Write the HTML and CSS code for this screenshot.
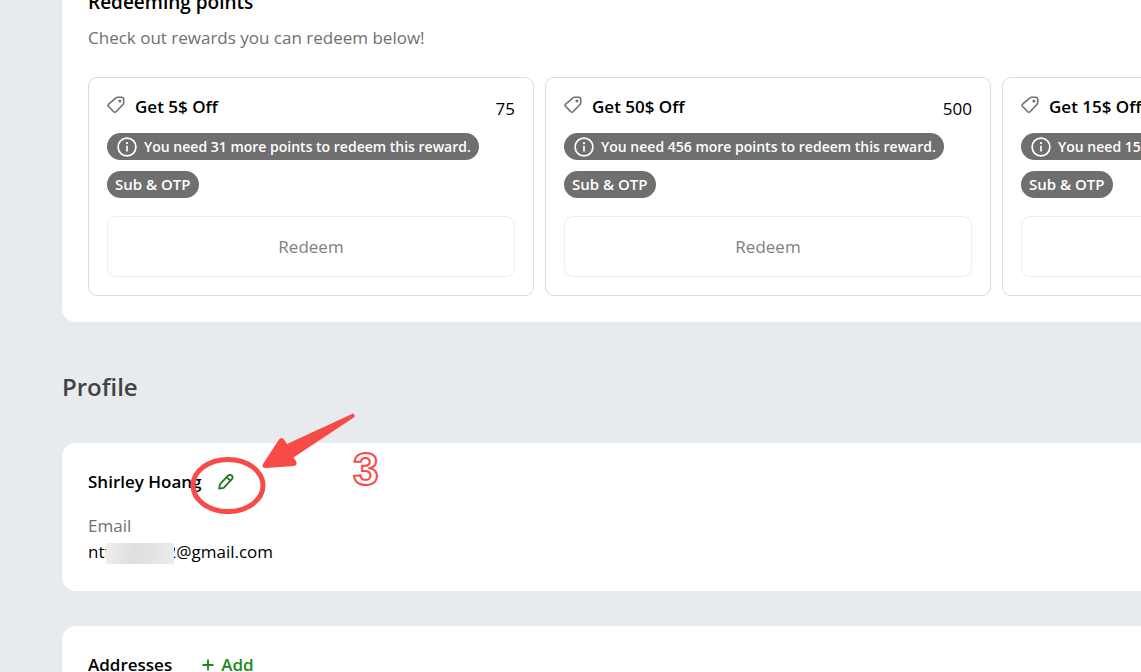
FILE: index.html
```html
<!DOCTYPE html>
<html lang="en">
<head>
<meta charset="utf-8">
<title>Rewards and profile</title>
<link rel="stylesheet" href="styles.css">
</head>
<body>
<svg class="defs" aria-hidden="true">
  <symbol id="tag" viewBox="0 0 18 18">
    <path d="M10.600 1.300h4.200a1.900 1.900 0 0 1 1.900 1.900v3.600a2.400 2.400 0 0 1-.7 1.700l-7 7.300a1.600 1.600 0 0 1-2.300 0L1.500 10.300a1.500 1.500 0 0 1 .1-2.200L9 1.900a2.400 2.400 0 0 1 1.600-.6z" fill="none" stroke="currentColor" stroke-width="1.600" stroke-linejoin="round"/>
    <circle cx="12.900" cy="5" r="1.500" fill="currentColor"/>
  </symbol>
  <symbol id="info" viewBox="0 0 20 20">
    <circle cx="10" cy="10" r="8.900" fill="none" stroke="currentColor" stroke-width="1.700"/>
    <path d="M10 8.800v5.600" fill="none" stroke="currentColor" stroke-width="1.700"/>
    <circle cx="10" cy="6.200" r="1.100" fill="currentColor"/>
  </symbol>
</svg>
<main class="page">
  <section class="panel rewards">
    <h2 class="title heading">Redeeming points</h2>
    <p class="lead">Check out rewards you can redeem below!</p>
    <div class="cards">
      <article class="card">
        <header class="card-head">
          <svg class="tag-icon"><use href="#tag"/></svg>
          <h3 class="title">Get 5$ Off</h3>
          <span class="cost">75</span>
        </header>
        <p class="pill notice"><svg class="info-icon"><use href="#info"/></svg>You need 31 more points to redeem this reward.</p>
        <p class="pill">Sub &amp; OTP</p>
        <button class="redeem" type="button">Redeem</button>
      </article>
      <article class="card">
        <header class="card-head">
          <svg class="tag-icon"><use href="#tag"/></svg>
          <h3 class="title">Get 50$ Off</h3>
          <span class="cost">500</span>
        </header>
        <p class="pill notice"><svg class="info-icon"><use href="#info"/></svg>You need 456 more points to redeem this reward.</p>
        <p class="pill">Sub &amp; OTP</p>
        <button class="redeem" type="button">Redeem</button>
      </article>
      <article class="card">
        <header class="card-head">
          <svg class="tag-icon"><use href="#tag"/></svg>
          <h3 class="title">Get 15$ Off</h3>
        </header>
        <p class="pill notice"><svg class="info-icon"><use href="#info"/></svg>You need 156 more points to redeem this reward.</p>
        <p class="pill">Sub &amp; OTP</p>
        <button class="redeem" type="button" aria-label="Redeem"></button>
      </article>
    </div>
  </section>

  <h1 class="section-title">Profile</h1>

  <section class="panel profile">
    <div class="row">
      <h2 class="title">Shirley Hoang</h2>
      <button class="edit" type="button" aria-label="Edit profile">
        <svg class="pencil" viewBox="0 0 16 18">
          <path d="M1.200 15.700 1.800 11.300 10 2.700a2.600 2.600 0 0 1 3.900 3.500L5.700 14.800zM8.700 4.300l3.700 3.400" fill="none" stroke="currentColor" stroke-width="1.800" stroke-linejoin="round"/>
        </svg>
      </button>
    </div>
    <p class="label">Email</p>
    <p class="value">ntt<span class="redacted"></span>2@gmail.com</p>
    <svg class="marks" viewBox="0 0 180 110" aria-hidden="true">
      <ellipse cx="38" cy="76.500" rx="35" ry="26" fill="none" stroke="#f84b48" stroke-width="5"/>
      <path d="M163 4.500 97 35 94 30.500Q91.500 27.500 89 30.500L73 55Q71 59 76 59L104 57Q108 56 106 52L103.500 48.500 164.500 8Q165 5 163 4.500z" fill="#f84b48"/>
    </svg>
    <span class="step">3</span>
  </section>

  <section class="panel addresses">
    <div class="row">
      <h2 class="title">Addresses</h2>
      <button class="add" type="button"><svg class="plus" viewBox="0 0 12 12"><path d="M6 .5v11M.5 6h11" stroke="currentColor" stroke-width="1.800"/></svg>Add</button>
    </div>
  </section>
</main>
</body>
</html>
```
FILE: styles.css
```css
* { box-sizing: border-box; }
body {
  margin: 0;
  background: #e7ebee;
  color: #000;
  font: 17px/26px "Open Sans", "Noto Sans", sans-serif;
  overflow: hidden;
}
h1, h2, h3, p { margin: 0; }
button { font: inherit; background: none; border: 0; padding: 0; }
.defs { display: none; }
.page { padding-left: 62px; }
.panel {
  background: #fff;
  border-radius: 14px 0 0 14px;
  padding: 26px 0 26px 26px;
}
.title { font-size: 17px; line-height: 26px; font-weight: 600; }
.rewards { margin-top: -11px; border-top-left-radius: 0; padding-top: 0; }
.heading { font-size: 19px; }
.lead { color: #707070; margin: 10px 0 26px; }
.cards { display: flex; gap: 11px; overflow: hidden; }
.card {
  flex: none;
  width: 446px;
  padding: 18px;
  border: 1px solid #dadada;
  border-radius: 9px;
  display: flex;
  flex-direction: column;
  align-items: flex-start;
}
.card-head { display: flex; align-self: stretch; height: 26px; margin-bottom: 11px; }
.card-head .title { line-height: 22px; }
.tag-icon { width: 18px; height: 18px; color: #707070; margin-right: 10px; }
.cost { margin-left: auto; }
.pill {
  background: #6f6f6f;
  color: #fff;
  border-radius: 14px;
  padding: 0 8px;
  font-size: 15px;
  line-height: 27px;
  font-weight: 600;
}
.notice { display: flex; align-items: center; margin-bottom: 11px; font-size: 14px; }
.info-icon { width: 20px; height: 20px; margin: 0 7px 0 2px; }
.redeem {
  align-self: stretch;
  height: 61px;
  margin-top: 18px;
  border: 1px solid #ededed;
  border-radius: 9px;
  color: #808080;
}
.section-title {
  margin: 47px 0 38px;
  font-size: 24px;
  line-height: 36px;
  font-weight: 600;
  color: #424242;
}
.profile { position: relative; margin-bottom: 35px; }
.row { display: flex; align-items: center; }
.edit { display: flex; margin-left: 16px; color: #1a7a1a; }
.pencil { width: 16px; height: 18px; }
.label { color: #707070; margin-top: 18px; }
.redacted {
  display: inline-block;
  position: relative;
  width: 68px;
  height: 21px;
  margin: 0 -7px 0 -5px;
  vertical-align: middle;
  background: linear-gradient(100deg, #f0f0f0, #dedede 40%, #e4e4e4 70%, #ececec);
}
.marks { position: absolute; left: 128px; top: -34px; width: 180px; height: 110px; }
.step {
  position: absolute;
  left: 291px;
  top: 2px;
  font: bold 46px/48px "Liberation Sans", Arial, sans-serif;
  color: #fff;
  -webkit-text-stroke: 2px #f84b48;
}
.add { display: flex; align-items: center; gap: 7px; margin-left: 30px; color: #1a8a1a; font-weight: 600; }
.plus { width: 12px; height: 12px; }
```
